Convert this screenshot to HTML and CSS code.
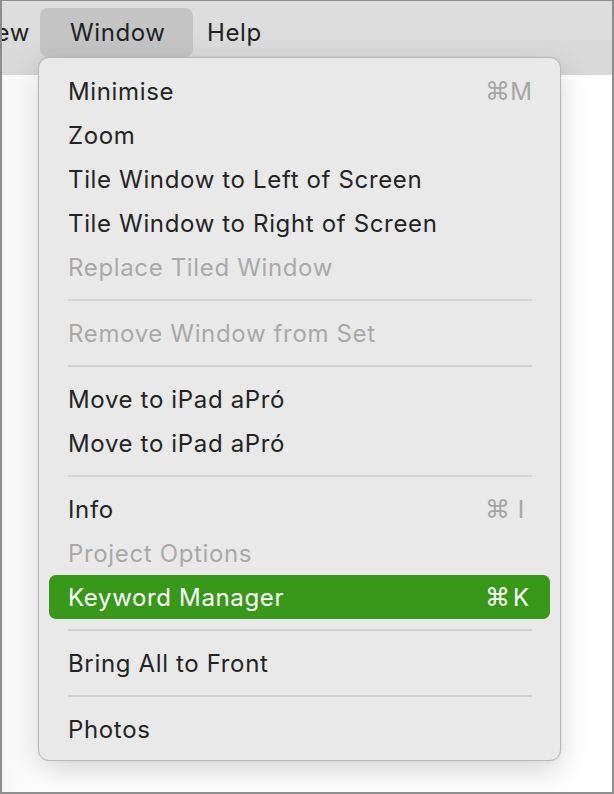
FILE: index.html
```html
<!DOCTYPE html>
<html>
<head>
<meta charset="utf-8">
<link rel="stylesheet" href="styles.css">
</head>
<body>
<div class="frame">
  <div class="menubar">
    <div class="mb-item mb-cut">ew</div>
    <div class="mb-item mb-active">Window</div>
    <div class="mb-item">Help</div>
  </div>
  <div class="content"></div>
  <div class="menu">
    <div class="row"><span class="label">Minimise</span><span class="sc"><span class="cmd">⌘</span><span class="key">M</span></span></div>
    <div class="row"><span class="label">Zoom</span></div>
    <div class="row"><span class="label">Tile Window to Left of Screen</span></div>
    <div class="row"><span class="label">Tile Window to Right of Screen</span></div>
    <div class="row disabled"><span class="label">Replace Tiled Window</span></div>
    <div class="sep"></div>
    <div class="row disabled"><span class="label">Remove Window from Set</span></div>
    <div class="sep"></div>
    <div class="row"><span class="label">Move to iPad aPró</span></div>
    <div class="row"><span class="label">Move to iPad aPró</span></div>
    <div class="sep"></div>
    <div class="row"><span class="label">Info</span><span class="sc"><span class="cmd">⌘</span><span class="key">I</span></span></div>
    <div class="row disabled"><span class="label">Project Options</span></div>
    <div class="row selected"><span class="label">Keyword Manager</span><span class="sc"><span class="cmd">⌘</span><span class="key">K</span></span></div>
    <div class="sep"></div>
    <div class="row"><span class="label">Bring All to Front</span></div>
    <div class="sep"></div>
    <div class="row"><span class="label">Photos</span></div>
  </div>
</div>
</body>
</html>
```
FILE: styles.css
```css
html, body {
  margin: 0;
  padding: 0;
  background: #ffffff;
}
body {
  font-family: Inter, "Noto Sans", "Liberation Sans", sans-serif;
  -webkit-font-smoothing: antialiased;
}
.frame {
  position: relative;
  width: 614px;
  height: 794px;
  box-sizing: border-box;
  border: 2px solid #8d8d8d;
  border-top-width: 1px;
  overflow: hidden;
  background: #ffffff;
  display: flex;
  flex-direction: column;
}
.menubar {
  height: 74px;
  flex: none;
  background: linear-gradient(#dedede, #d8d8d8);
  display: flex;
  align-items: flex-start;
  padding-top: 7px;
  box-sizing: border-box;
  overflow: hidden;
}
.mb-item {
  height: 49px;
  display: flex;
  align-items: center;
  font-size: 24px;
  letter-spacing: 0.6px;
  color: #222222;
  padding: 0 14px;
  border-radius: 8px;
}
.mb-cut {
  padding: 0 10px 0 0;
  width: 38px;
  box-sizing: border-box;
  justify-content: flex-end;
}
.mb-active {
  background: #c4c4c4;
  padding: 0 26px 0 30px;
  width: 153px;
  box-sizing: border-box;
}
.content {
  flex: 1;
  background: linear-gradient(90deg, #f7f7f7, #ffffff 40px);
}
.menu {
  position: absolute;
  left: 36px;
  top: 56px;
  width: 523px;
  height: 704px;
  box-sizing: border-box;
  background: #e9e9e9;
  border: 1px solid #b9b9b9;
  border-radius: 11px;
  padding: 11px 10px 8px;
  box-shadow: 0 10px 30px rgba(0, 0, 0, 0.16), 0 0 2px rgba(0, 0, 0, 0.08);
}
.row {
  height: 44px;
  display: flex;
  align-items: center;
  justify-content: space-between;
  padding: 0 18px 0 19px;
  font-size: 24px;
  letter-spacing: 0.65px;
  color: #242424;
  border-radius: 7px;
}
.row.disabled {
  color: #a9a9a9;
}
.row.selected {
  background: #37981a;
  color: #ffffff;
}
.sc {
  display: flex;
  align-items: center;
  color: #a6a6a6;
  letter-spacing: 0;
}
.row.selected .sc {
  color: #ffffff;
}
.cmd {
  width: 25px;
  font-family: "DejaVu Sans", sans-serif;
  font-size: 25px;
}
.key {
  width: 22px;
  text-align: center;
}
.sep {
  height: 22px;
  display: flex;
  align-items: center;
  padding: 0 18px 0 19px;
}
.sep::before {
  content: "";
  flex: 1;
  height: 2px;
  background: #d2d2d2;
}
```
